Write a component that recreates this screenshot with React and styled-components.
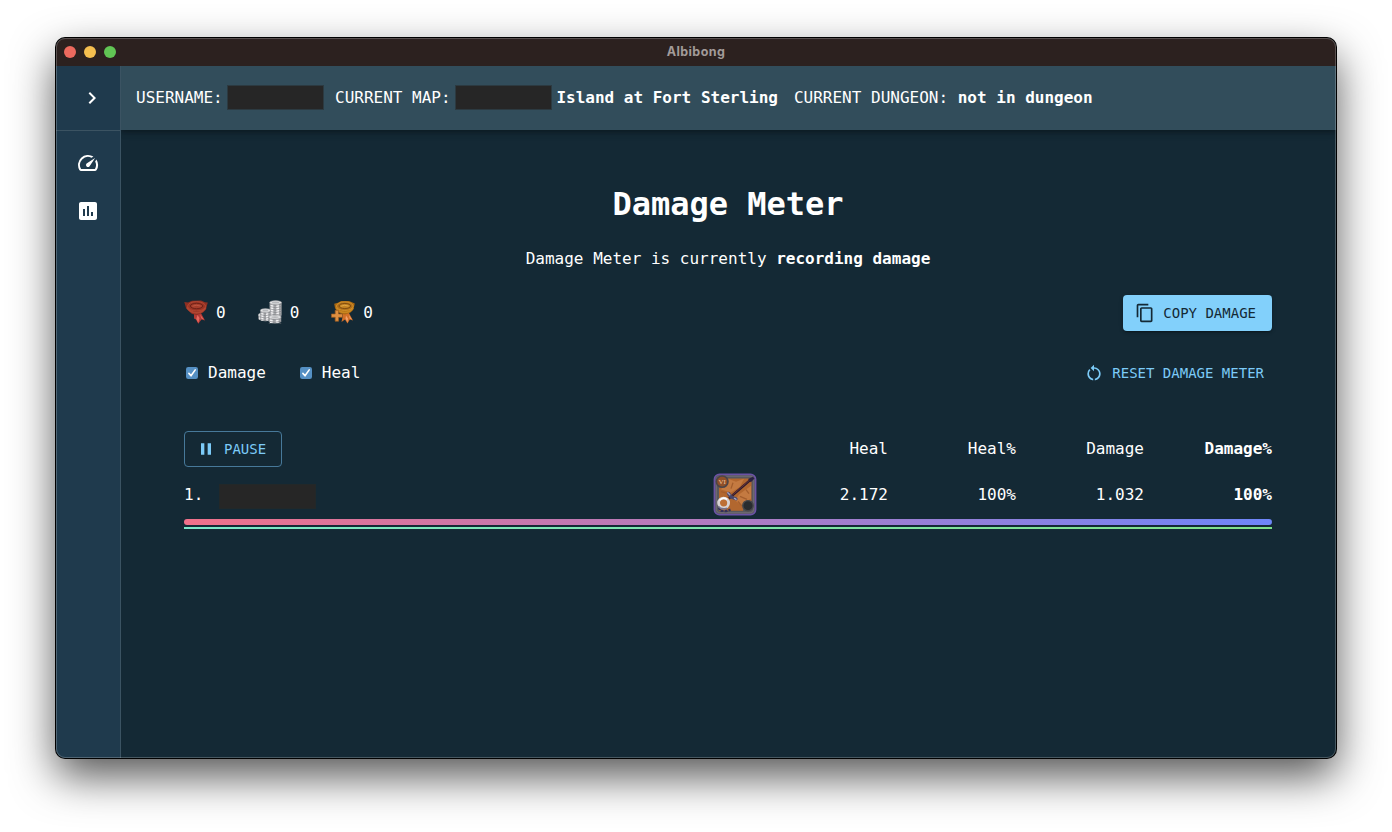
import React from "react";
import styled, { createGlobalStyle, css } from "styled-components";
import {
  MdChevronRight,
  MdOutlineSpeed,
  MdAssessment,
  MdContentCopy,
  MdRestartAlt,
  MdPause,
} from "react-icons/md";

const GlobalStyle = createGlobalStyle`
  *, *::before, *::after { box-sizing: border-box; }
  body {
    margin: 0;
    background: #fff;
    overflow: hidden;
    color: #fff;
    font-family: "DejaVu Sans Mono", monospace;
    font-size: 16px;
    line-height: 24px;
  }
`;

const Desktop = styled.div`
  width: 1392px;
  height: 832px;
  padding: 38px 56px 74px;
`;

const Window = styled.div`
  position: relative;
  height: 720px;
  display: flex;
  flex-direction: column;
  border-radius: 9px;
  background: #142935;
  box-shadow: 0 0 0 1px #000, 0 18px 44px rgba(0, 0, 0, 0.68);

  &::after {
    content: "";
    position: absolute;
    inset: 0;
    border-radius: 9px;
    border: 1px solid rgba(255, 255, 255, 0.22);
    pointer-events: none;
  }
`;

const TitleBar = styled.div`
  height: 28px;
  display: grid;
  grid-template-columns: 1fr auto 1fr;
  align-items: center;
  padding: 0 8px;
  background: #2c211f;
  border-radius: 9px 9px 0 0;
`;

const TrafficLights = styled.div`
  display: flex;
  gap: 8px;
`;

const Light = styled.span`
  width: 12px;
  height: 12px;
  border-radius: 50%;
  background: ${(p) => p.$color};
`;

const WindowTitle = styled.span`
  font: 700 12.5px/16px Inter, sans-serif;
  letter-spacing: 0.4px;
  color: #a29b99;
`;

const Body = styled.div`
  flex: 1;
  display: flex;
  min-height: 0;
`;

const Sidebar = styled.nav`
  width: 65px;
  flex: none;
  background: #1f3a4d;
  border-right: 1px solid #3b5362;
  border-radius: 0 0 0 9px;
`;

const Expander = styled.div`
  height: 65px;
  display: flex;
  align-items: center;
  justify-content: center;
  padding-left: 8px;
  border-bottom: 1px solid #3b5362;
  font-size: 24px;
`;

const NavList = styled.div`
  display: flex;
  flex-direction: column;
  padding-top: 8px;
`;

const NavItem = styled.div`
  height: 48px;
  display: flex;
  align-items: center;
  justify-content: center;
  font-size: 24px;
`;

const Content = styled.div`
  flex: 1;
  min-width: 0;
  overflow: hidden;
  border-radius: 0 0 9px 0;
`;

const AppBar = styled.header`
  height: 64px;
  display: flex;
  align-items: center;
  gap: 16px;
  padding: 0 15px 1px;
  background: #324d5b;
  white-space: pre;
  box-shadow: 0 2px 4px -1px rgba(0, 0, 0, 0.2), 0 4px 5px rgba(0, 0, 0, 0.14),
    0 1px 10px rgba(0, 0, 0, 0.12);
`;

const Status = styled.div`
  display: flex;
  align-items: center;
  margin-right: ${(p) => p.$pull || 0}px;
`;

const Redacted = styled.span`
  width: 97px;
  height: 25px;
  background: #262626;
  border: 1px solid ${(p) => p.$edge || "#2c3a41"};
  margin: ${(p) => p.$margin};
`;

const Page = styled.main`
  padding: 55px 64px 0 63px;
`;

const Heading = styled.h1`
  margin: 0;
  font-size: 32px;
  line-height: 38px;
  text-align: center;
`;

const Subtitle = styled.p`
  margin: 24px 0;
  text-align: center;
`;

const Toolbar = styled.div`
  height: 36px;
  display: flex;
  align-items: center;
  justify-content: space-between;
  margin-bottom: ${(p) => p.$after}px;
`;

const Group = styled.div`
  display: flex;
  align-items: center;
  gap: ${(p) => p.$gap}px;
`;

const Stat = styled.div`
  display: flex;
  align-items: center;
  gap: 8px;

  svg { display: block; margin-top: -2px; }
`;

const Button = styled.button`
  height: 36px;
  display: flex;
  align-items: center;
  gap: 8px;
  border: 0;
  border-radius: 4px;
  padding: 0 16px 0 12px;
  background: transparent;
  color: #7ccbf8;
  font: 14px/24px "DejaVu Sans Mono", monospace;

  svg { font-size: 20px; }

  ${(p) =>
    p.$variant === "contained" &&
    css`
      background: #82d0fb;
      color: #142935;
      box-shadow: 0 3px 1px -2px rgba(0, 0, 0, 0.2), 0 2px 2px rgba(0, 0, 0, 0.14),
        0 1px 5px rgba(0, 0, 0, 0.12);
    `}
  ${(p) => p.$variant === "text" && css`padding: 0 8px 0 4px;`}
  ${(p) =>
    p.$variant === "outlined" &&
    css`
      padding: 0 15px 0 11px;
      border: 1px solid #47799a;
    `}
`;

const CheckLabel = styled.div`
  display: flex;
  align-items: center;
  gap: 10px;
  padding-left: 2px;

  svg { display: block; }
`;

const Row = styled.div`
  display: grid;
  grid-template-columns: 1fr 42px 132px repeat(3, 128px);
  align-items: center;
  height: ${(p) => p.$height}px;
  padding-top: ${(p) => p.$inset || 0}px;
`;

const Cell = styled.div`
  text-align: right;
  font-weight: ${(p) => (p.$bold ? 700 : 400)};
`;

const Player = styled.div`
  display: flex;
  align-items: center;
`;

const DamageBar = styled.div`
  height: 6px;
  margin-top: 2px;
  border-radius: 3px;
  background: linear-gradient(90deg, #f0718a, #6e86fa);
`;

const HealBar = styled.div`
  height: 2px;
  margin-top: 2px;
  background: linear-gradient(90deg, #7ce8cb, #7fe08a);
`;

function FameIcon() {
  return (
    <svg width="24" height="24" viewBox="0 0 24 24">
      <path d="M10 13 L17 13 L18 15 L21 20.5 L17.5 19.5 L14.3 23.8 L12 19.5 L10 18.5Z" fill="#b23a35" />
      <path d="M13.5 15 L15.5 18 L14.3 23 L12.3 19Z M16 14.5 L20 19.5 L17.5 18.5Z" fill="#e8675f" />
      <path d="M.3 2 L4 2.6 L8 .8 L17 .6 L21 2.2 L23.8 2.6 L22.8 6 L22 9.5 L19 12.5 L13 15 L8 14 L4.5 10.5 L2 8Z" fill="#8e2f22" />
      <path d="M3 7.5 Q6 12.5 12.5 12.8 Q19 12.5 21.5 7.5" fill="none" stroke="#b04531" strokeWidth="1.8" />
      <ellipse cx="12.6" cy="6.3" rx="9" ry="4.7" fill="#9a3525" stroke="#b94b36" strokeWidth=".8" />
      <ellipse cx="12.6" cy="6" rx="6.2" ry="2.7" fill="#a63d2b" stroke="#6f2218" />
      <path d="M8.5 6.2 Q12 4.4 16.5 6" fill="none" stroke="#c05a43" strokeWidth=".9" />
    </svg>
  );
}

function CoinStack({ x, top, bottom, rx }) {
  const edges = [];
  for (let y = top + 3.6; y < bottom; y += 2.4) edges.push(y);
  return (
    <g>
      <path
        d={`M${x - rx} ${top + 1.8} V${bottom - 1.6} Q${x} ${bottom + 1.4} ${x + rx} ${bottom - 1.6} V${top + 1.8}Z`}
        fill="#a7a9ac"
      />
      <path
        d={`M${x - rx * 0.6} ${top + 2} V${bottom - 0.6} M${x + rx * 0.35} ${top + 2} V${bottom - 0.5}`}
        stroke="#f2f2f3"
        strokeWidth={rx * 0.45}
      />
      {edges.map((y) => (
        <path
          key={y}
          d={`M${x - rx} ${y} Q${x} ${y + 2.2} ${x + rx} ${y}`}
          fill="none"
          stroke="#77797d"
          strokeWidth=".6"
        />
      ))}
      <ellipse cx={x} cy={top + 1.9} rx={rx} ry="1.9" fill="#e3e4e5" stroke="#8f9194" strokeWidth=".5" />
      <ellipse cx={x} cy={top + 1.9} rx={rx * 0.6} ry=".9" fill="#b6b8bb" />
    </g>
  );
}

function SilverIcon() {
  return (
    <svg width="24" height="24" viewBox="0 0 24 24">
      <CoinStack x={17.6} top={0.6} bottom={17} rx={6} />
      <CoinStack x={4} top={13} bottom={20.6} rx={3.6} />
      <CoinStack x={7.4} top={8.6} bottom={21.4} rx={5} />
      <CoinStack x={17} top={15.2} bottom={23.6} rx={6.2} />
    </svg>
  );
}

function BonusFameIcon() {
  return (
    <svg width="24" height="24" viewBox="0 0 24 24">
      <path d="M12 13 L18 13 L19 15 L22 20.5 L18.8 19.5 L16.5 23.5 L14 19.5 L10.5 22 L11.5 17Z" fill="#d36f27" />
      <path d="M15 15.5 L17 18.5 L16.5 22.5 L14.5 18.5Z M17.8 15 L21 19.5 L18.8 18.5Z" fill="#f4a069" />
      <path d="M3.2 3.8 L7 2.8 L10 1 L18 1 L21.5 2.6 L23.8 3.6 L23 7 L22.3 9.8 L19.5 12.5 L14 14.5 L9 13.5 L5.5 10.5 L4 8Z" fill="#a96812" />
      <path d="M5.5 7.8 Q8 12.2 13.6 12.4 Q19.5 12.2 22 7.8" fill="none" stroke="#c88620" strokeWidth="1.7" />
      <ellipse cx="13.8" cy="6.2" rx="8.4" ry="4.3" fill="#b0701a" stroke="#d9982f" strokeWidth=".8" />
      <ellipse cx="13.8" cy="6" rx="5.8" ry="2.5" fill="#c58422" stroke="#7f4b10" />
      <path d="M10 6.2 Q13 4.6 17.5 6" fill="none" stroke="#e3aa4c" strokeWidth=".9" />
      <path d="M4.2 10.3h3.4v3.7h3.9v3.3H7.6v3.9H4.2v-3.9H.5V14h3.7z" fill="#df8f40" stroke="#9c5a1f" strokeWidth=".7" />
    </svg>
  );
}

function CheckIcon() {
  return (
    <svg width="12" height="12" viewBox="0 0 12 12">
      <rect width="12" height="12" rx="2.2" fill="#5590c4" />
      <path d="M2.9 6.4 L5 8.8 L9.2 2.9" fill="none" stroke="#fff" strokeWidth="1.6" strokeLinecap="round" strokeLinejoin="round" />
    </svg>
  );
}

const WeaponArt = styled.svg`
  display: block;
  margin: -1px 0 0 -1px;
`;

function WeaponIcon() {
  return (
    <WeaponArt width="44" height="43" viewBox="0 0 44 44" preserveAspectRatio="none">
      <rect x="1.5" y="1.5" width="41" height="41" rx="5" fill="#59585d" stroke="#6b52a5" strokeWidth="1.8" />
      <rect x="3.3" y="3.3" width="37.4" height="37.4" rx="3.5" fill="none" stroke="#77747b" strokeWidth=".8" />
      <path d="M6 5.5 H38.5 V29 L31 34 L30 38.5 H6Z" fill="#b2672f" />
      <path d="M15 6 L23 9 L31 6 L27 14 L18 20 L8 17Z M26 22 L38 13 V26 L28 33 L22 28Z" fill="#c47a41" />
      <path d="M8 19 L15 21 M20 10 L18 16 M27 24 L34 27 M25 29 L29 34 M33 17 L36 21" fill="none" stroke="#a45e2d" strokeWidth="1.3" />
      <circle cx="9.2" cy="8.8" r="5.8" fill="#8f5029" stroke="#4d4548" strokeWidth="1.6" />
      <text x="9.2" y="11.4" textAnchor="middle" fontFamily="Liberation Serif, serif" fontSize="7" fill="#f5c39a">VI</text>
      <circle cx="35" cy="33.4" r="5.2" fill="#292c2f" stroke="#47474b" strokeWidth="1.4" />
      <path d="M16 26 L38 6.5" stroke="#2c1d2b" strokeWidth="2.4" />
      <path d="M19 23 L37 7" stroke="#6e3138" strokeWidth="1" />
      <path d="M35 6.2 L40 3.8 L41.5 5.6 L37.8 9.4Z" fill="#2a2144" />
      <path d="M15.5 21 L18 24.5 L23 26.5" fill="none" stroke="#47466a" strokeWidth="3.2" strokeLinecap="round" />
      <path d="M14.8 20.3 L16.8 22.3 M21.5 26 L23 27" stroke="#a8a4ba" strokeWidth="1.4" strokeLinecap="round" />
      <path d="M6 35 L7.5 38.6 L13 39 L17.5 37.5" fill="none" stroke="#34305a" strokeWidth="2.4" strokeDasharray="3 1" />
      <circle cx="10.6" cy="30.7" r="5" fill="#bd6f35" stroke="#d8d3d4" strokeWidth="2.8" />
      <path d="M5.2 34 Q8 38 14 36" fill="none" stroke="#77738c" strokeWidth="1.5" />
      <path d="M6.5 28 Q10 24 14 27" fill="none" stroke="#fff" strokeWidth="1.5" />
    </WeaponArt>
  );
}

export default function App() {
  return (
    <Desktop>
      <GlobalStyle />
      <Window>
        <TitleBar>
          <TrafficLights>
            <Light $color="#ed6a5e" />
            <Light $color="#f5bf4f" />
            <Light $color="#61c554" />
          </TrafficLights>
          <WindowTitle>Albibong</WindowTitle>
        </TitleBar>
        <Body>
          <Sidebar>
            <Expander><MdChevronRight /></Expander>
            <NavList>
              <NavItem><MdOutlineSpeed /></NavItem>
              <NavItem><MdAssessment /></NavItem>
            </NavList>
          </Sidebar>
          <Content>
            <AppBar>
              <Status $pull={-5}>
                <span>USERNAME:</span>
                <Redacted $margin="0 0 0 4.3px" />
              </Status>
              <Status>
                <span>CURRENT MAP:</span>
                <Redacted $margin="0 4.5px 0 4.3px" />
                <b>Island at Fort Sterling</b>
              </Status>
              <Status>
                <span>CURRENT DUNGEON: </span>
                <b>not in dungeon</b>
              </Status>
            </AppBar>
            <Page>
              <Heading>Damage Meter</Heading>
              <Subtitle>Damage Meter is currently <b>recording damage</b></Subtitle>
              <Toolbar $after={24}>
                <Group $gap={32}>
                  <Stat><FameIcon />0</Stat>
                  <Stat><SilverIcon />0</Stat>
                  <Stat><BonusFameIcon />0</Stat>
                </Group>
                <Button $variant="contained"><MdContentCopy />COPY DAMAGE</Button>
              </Toolbar>
              <Toolbar $after={40}>
                <Group $gap={32}>
                  <CheckLabel><CheckIcon />Damage</CheckLabel>
                  <CheckLabel><CheckIcon />Heal</CheckLabel>
                </Group>
                <Button $variant="text"><MdRestartAlt />RESET DAMAGE METER</Button>
              </Toolbar>
              <Row $height={36}>
                <Player><Button $variant="outlined"><MdPause />PAUSE</Button></Player>
                <span />
                <Cell>Heal</Cell>
                <Cell>Heal%</Cell>
                <Cell>Damage</Cell>
                <Cell $bold>Damage%</Cell>
              </Row>
              <Row $height={50} $inset={6}>
                <Player>
                  <span>1.</span>
                  <Redacted $edge="#222829" $margin="2px 0 0 16.2px" />
                </Player>
                <WeaponIcon />
                <Cell>2.172</Cell>
                <Cell>100%</Cell>
                <Cell>1.032</Cell>
                <Cell $bold>100%</Cell>
              </Row>
              <DamageBar />
              <HealBar />
            </Page>
          </Content>
        </Body>
      </Window>
    </Desktop>
  );
}
